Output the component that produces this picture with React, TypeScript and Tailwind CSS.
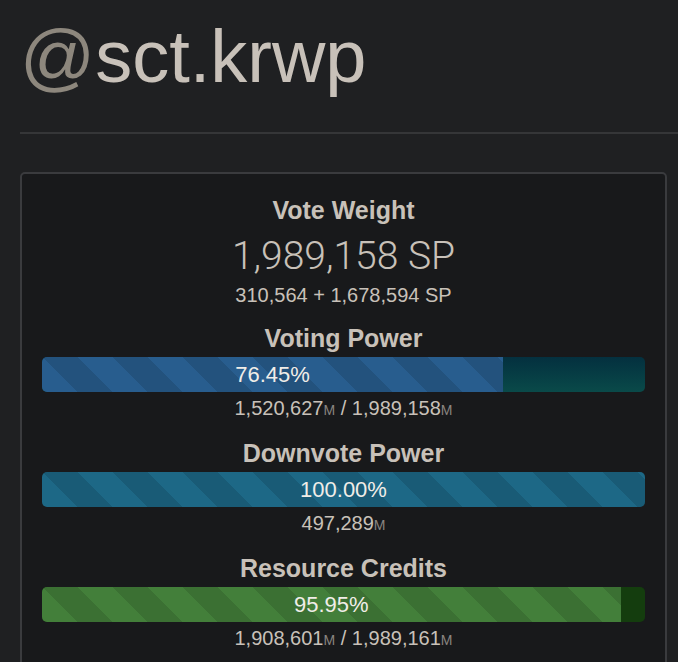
import React from "react";

const stripes =
  "linear-gradient(45deg, rgba(0,0,0,0.12) 25%, transparent 25%, transparent 50%, rgba(0,0,0,0.12) 50%, rgba(0,0,0,0.12) 75%, transparent 75%, transparent)";

type BarProps = {
  label: string;
  pct: number;
  fill: string;
  track: string;
  children: React.ReactNode;
};

const Unit = () => <span className="text-[14px] text-[#8a8580]">M</span>;

const MeterBar = ({ label, pct, fill, track, children }: BarProps) => (
  <div className="flex flex-col items-center">
    <h3 className="text-[25px] leading-[28px] font-bold">{label}</h3>
    <div className={`mt-[5px] w-full h-[35px] rounded-[5px] overflow-hidden flex ${track}`}>
      <div
        className={`h-full flex items-center justify-center text-[22px] text-[#f0ede8] bg-[length:70px_70px] ${fill}`}
        style={{ width: `${pct}%`, backgroundImage: stripes }}
      >
        {pct.toFixed(2)}%
      </div>
    </div>
    <p className="mt-1 text-[20px] leading-[24px]">{children}</p>
  </div>
);

export default function App() {
  return (
    <div className="min-h-[662px] bg-[#1f2022] text-[#c8c1b9] font-['Liberation_Sans',Arial,sans-serif]">
      <div className="pt-4 pl-5">
        <h1 className="text-[74px] leading-[1.1]">
          <span className="text-[#8d877d]">@</span>sct.krwp
        </h1>
      </div>
      <div className="mt-[35px] ml-5 h-[2px] bg-[#353638]" />

      <div className="pl-5 pr-[11px] pt-[38px]">
        <div className="rounded-[5px] border-2 border-[#3a3b3e] bg-[#18191b] px-5 pt-[22px] pb-6 text-center">
          <h3 className="text-[25px] leading-[28px] font-bold">Vote Weight</h3>
          <p className="mt-[10px] text-[39px] leading-[44px] font-light font-['Roboto',sans-serif]">
            1,989,158 SP
          </p>
          <p className="mt-[5px] text-[20px] leading-[24px]">310,564 + 1,678,594 SP</p>

          <div className="mt-[17px] flex flex-col gap-[17px]">
            <MeterBar
              label="Voting Power"
              pct={76.45}
              fill="bg-[#285d8e]"
              track="bg-gradient-to-b from-[#04303f] to-[#0a4a49]"
            >
              1,520,627<Unit /> / 1,989,158<Unit />
            </MeterBar>
            <MeterBar label="Downvote Power" pct={100} fill="bg-[#1d6886]" track="bg-[#04303f]">
              497,289<Unit />
            </MeterBar>
            <MeterBar label="Resource Credits" pct={95.95} fill="bg-[#437f3a]" track="bg-[#143d0e]">
              1,908,601<Unit /> / 1,989,161<Unit />
            </MeterBar>
          </div>
        </div>
      </div>
    </div>
  );
}
